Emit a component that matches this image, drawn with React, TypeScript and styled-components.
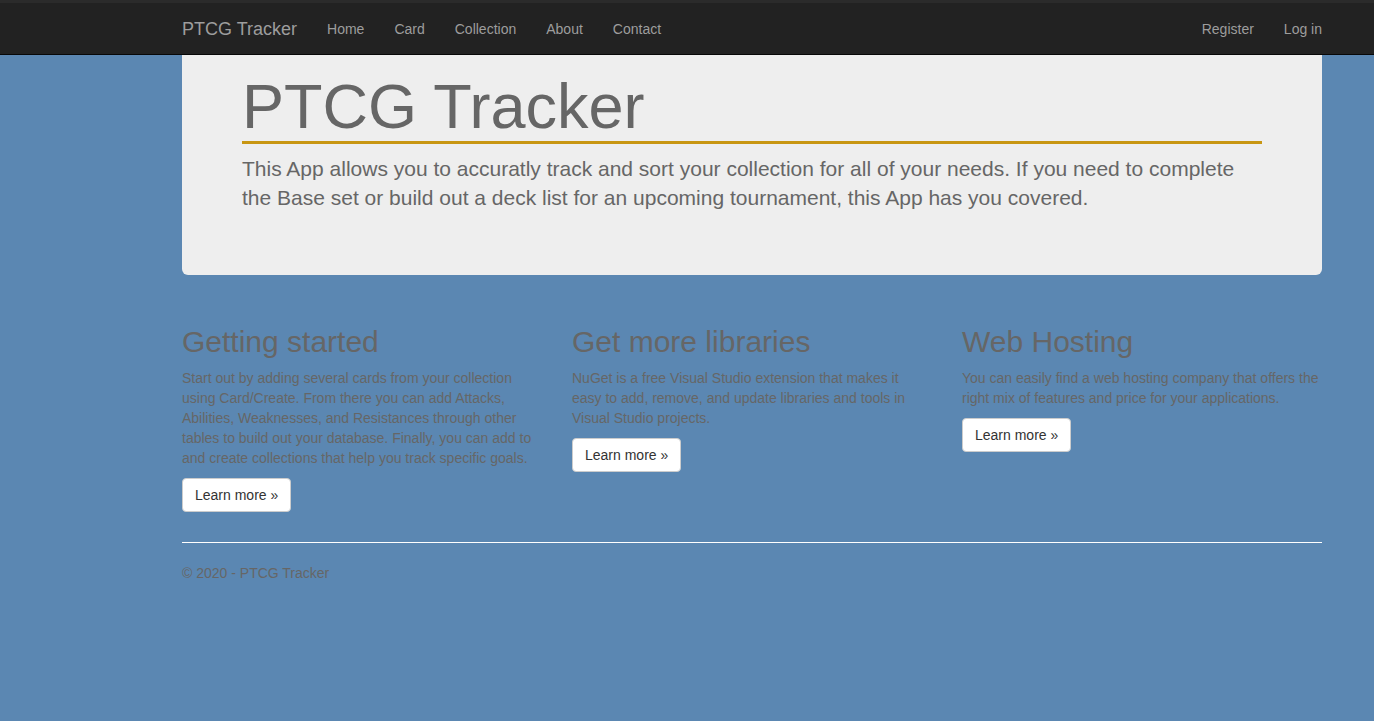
import React from 'react';
import styled, { createGlobalStyle } from 'styled-components';

const GlobalStyle = createGlobalStyle`
  html, body {
    margin: 0;
    padding: 0;
    background: #5b87b2;
    font-family: "Liberation Sans", Arial, Helvetica, sans-serif;
    font-size: 14px;
    line-height: 20px;
    color: #666;
  }
  * { box-sizing: border-box; }
`;

const navLinks = ['Home', 'Card', 'Collection', 'About', 'Contact'];
const authLinks = ['Register', 'Log in'];

const features = [
  {
    title: 'Getting started',
    text: 'Start out by adding several cards from your collection using Card/Create. From there you can add Attacks, Abilities, Weaknesses, and Resistances through other tables to build out your database. Finally, you can add to and create collections that help you track specific goals.',
  },
  {
    title: 'Get more libraries',
    text: 'NuGet is a free Visual Studio extension that makes it easy to add, remove, and update libraries and tools in Visual Studio projects.',
  },
  {
    title: 'Web Hosting',
    text: 'You can easily find a web hosting company that offers the right mix of features and price for your applications.',
  },
];

const App = () => {
  return (
    <Page>
      <GlobalStyle />
      <TopStrip />
      <Navbar>
        <NavInner>
          <Brand href="#">PTCG Tracker</Brand>
          <NavList>
            {navLinks.map((l) => (
              <NavLink key={l} href="#">{l}</NavLink>
            ))}
          </NavList>
          <NavList $right>
            {authLinks.map((l) => (
              <NavLink key={l} href="#">{l}</NavLink>
            ))}
          </NavList>
        </NavInner>
      </Navbar>

      <Container>
        <Jumbotron>
          <Title>PTCG Tracker</Title>
          <Lead>
            This App allows you to accuratly track and sort your collection for all of your
            needs. If you need to complete the Base set or build out a deck list for an
            upcoming tournament, this App has you covered.
          </Lead>
        </Jumbotron>

        <Row>
          {features.map((f) => (
            <Column key={f.title}>
              <Heading>{f.title}</Heading>
              <Text>{f.text}</Text>
              <ButtonWrap>
                <LearnButton href="#">Learn more &raquo;</LearnButton>
              </ButtonWrap>
            </Column>
          ))}
        </Row>

        <Rule />
        <Footer>&copy; 2020 - PTCG Tracker</Footer>
      </Container>
    </Page>
  );
};

export default App;

const Page = styled.div`
  min-height: 721px;
`;

const TopStrip = styled.div`
  height: 3px;
  background: #2b2b2b;
`;

const Navbar = styled.nav`
  height: 52px;
  background: #222;
  border-bottom: 1px solid #080808;
`;

const NavInner = styled.div`
  display: flex;
  align-items: center;
  width: 1170px;
  margin-left: 167px;
  height: 51px;
`;

const Brand = styled.a`
  font-size: 18px;
  line-height: 20px;
  padding: 15px;
  color: #9d9d9d;
  text-decoration: none;
`;

const NavList = styled.div<{ $right?: boolean }>`
  display: flex;
  margin-left: ${(p) => (p.$right ? 'auto' : '0')};
`;

const NavLink = styled.a`
  padding: 15px;
  font-size: 14px;
  line-height: 20px;
  color: #9d9d9d;
  text-decoration: none;
`;

const Container = styled.div`
  width: 1140px;
  margin-left: 182px;
`;

const Jumbotron = styled.div`
  background: #eee;
  padding: 17px 60px 47px;
  border-radius: 0 0 6px 6px;
  margin-bottom: 30px;
`;

const Title = styled.h1`
  margin: 0;
  font-size: 63px;
  line-height: 69px;
  font-weight: 400;
  color: #666;
  border-bottom: 3px solid #c89612;
`;

const Lead = styled.p`
  margin: 10px 0 15px;
  font-size: 21px;
  line-height: 29.4px;
  color: #666;
`;

const Row = styled.div`
  display: grid;
  grid-template-columns: repeat(3, 1fr);
  margin: 0 -15px;
`;

const Column = styled.div`
  padding: 0 15px;
`;

const Heading = styled.h2`
  margin: 20px 0 10px;
  font-size: 30px;
  line-height: 33px;
  font-weight: 400;
  color: #666;
`;

const Text = styled.p`
  margin: 0 0 10px;
  font-size: 14px;
  line-height: 20px;
  color: #666;
`;

const ButtonWrap = styled.p`
  margin: 0 0 10px;
`;

const LearnButton = styled.a`
  display: inline-block;
  padding: 6px 12px;
  font-size: 14px;
  line-height: 20px;
  color: #333;
  background: #fff;
  border: 1px solid #ccc;
  border-radius: 4px;
  text-decoration: none;
`;

const Rule = styled.hr`
  margin: 20px 0;
  border: 0;
  border-top: 1px solid #fff;
`;

const Footer = styled.p`
  margin: 0;
  font-size: 14px;
  line-height: 20px;
  color: #666;
`;
